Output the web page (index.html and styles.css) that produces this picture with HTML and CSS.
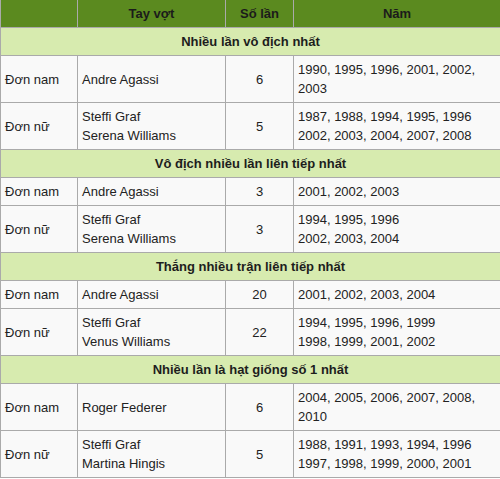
FILE: index.html
```html
<!DOCTYPE html>
<html lang="vi">
<head>
<meta charset="utf-8">
<link rel="stylesheet" href="styles.css">
</head>
<body>
<table class="rec">
  <colgroup>
    <col class="c1"><col class="c2"><col class="c3"><col class="c4">
  </colgroup>
  <thead>
    <tr class="head"><th></th><th>Tay vợt</th><th>Số lần</th><th>Năm</th></tr>
  </thead>
  <tbody>
    <tr class="sec"><td colspan="4">Nhiều lần vô địch nhất</td></tr>
    <tr><td class="cat">Đơn nam</td><td class="pl">Andre Agassi</td><td class="num">6</td><td class="yr">1990, 1995, 1996, 2001, 2002, 2003</td></tr>
    <tr><td class="cat">Đơn nữ</td><td class="pl">Steffi Graf<br>Serena Williams</td><td class="num">5</td><td class="yr">1987, 1988, 1994, 1995, 1996<br>2002, 2003, 2004, 2007, 2008</td></tr>
    <tr class="sec"><td colspan="4">Vô địch nhiều lần liên tiếp nhất</td></tr>
    <tr><td class="cat">Đơn nam</td><td class="pl">Andre Agassi</td><td class="num">3</td><td class="yr">2001, 2002, 2003</td></tr>
    <tr><td class="cat">Đơn nữ</td><td class="pl">Steffi Graf<br>Serena Williams</td><td class="num">3</td><td class="yr">1994, 1995, 1996<br>2002, 2003, 2004</td></tr>
    <tr class="sec"><td colspan="4">Thắng nhiều trận liên tiếp nhất</td></tr>
    <tr><td class="cat">Đơn nam</td><td class="pl">Andre Agassi</td><td class="num">20</td><td class="yr">2001, 2002, 2003, 2004</td></tr>
    <tr><td class="cat">Đơn nữ</td><td class="pl">Steffi Graf<br>Venus Williams</td><td class="num">22</td><td class="yr">1994, 1995, 1996, 1999<br>1998, 1999, 2001, 2002</td></tr>
    <tr class="sec"><td colspan="4">Nhiều lần là hạt giống số 1 nhất</td></tr>
    <tr><td class="cat">Đơn nam</td><td class="pl">Roger Federer</td><td class="num">6</td><td class="yr">2004, 2005, 2006, 2007, 2008, 2010</td></tr>
    <tr><td class="cat">Đơn nữ</td><td class="pl">Steffi Graf<br>Martina Hingis</td><td class="num">5</td><td class="yr">1988, 1991, 1993, 1994, 1996<br>1997, 1998, 1999, 2000, 2001</td></tr>
  </tbody>
</table>
</body>
</html>
```

FILE: styles.css
```css
html, body {
  margin: 0;
  padding: 0;
  background: #ffffff;
}

.rec {
  width: 500px;
  table-layout: fixed;
  border-collapse: collapse;
  font-family: "Liberation Sans", Arial, sans-serif;
  font-size: 13px;
  line-height: 19px;
  color: #222222;
  background: #f9f9f9;
}

.c1 { width: 77px; }
.c2 { width: 148px; }
.c3 { width: 68px; }
.c4 { width: 207px; }

.rec th,
.rec td {
  border: 1px solid #aaaaaa;
  padding: 4px 4px;
  vertical-align: middle;
}

.head th {
  background: #5b8a1f;
  color: #1b1b1b;
  font-weight: bold;
  text-align: center;
  border-top: none;
}

.sec td {
  background: #d7ebaf;
  font-weight: bold;
  text-align: center;
  color: #1d1d1d;
}

.cat { text-align: left; }
.pl { padding-left: 7px; text-align: left; }
.num { text-align: center; }
.yr { text-align: left; }
```
